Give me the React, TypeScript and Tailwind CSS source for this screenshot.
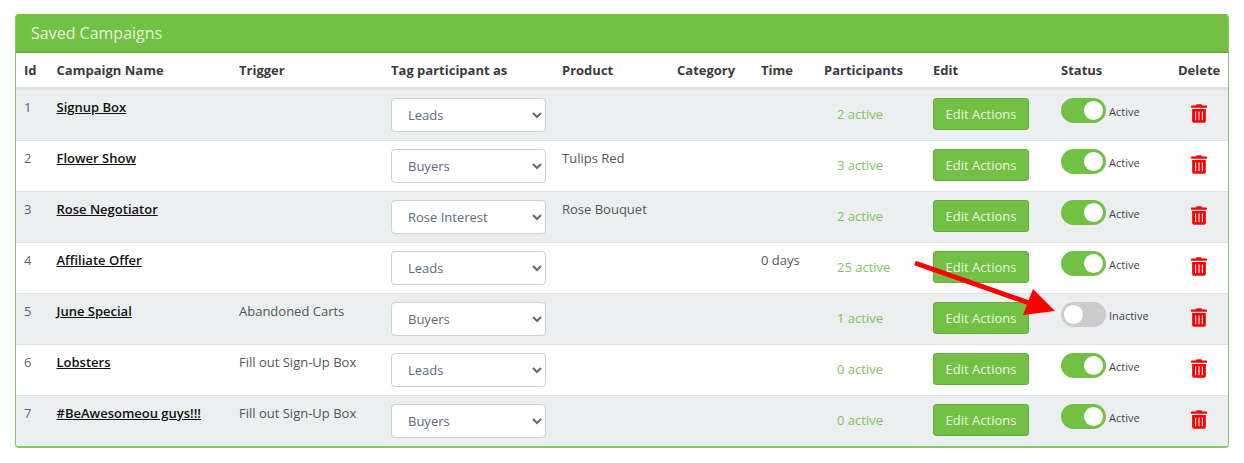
// App.tsx
import React from 'react';
import { FaTrashAlt } from 'react-icons/fa';

interface Campaign {
  id: number;
  name: string;
  trigger: string;
  tag: string;
  product: string;
  time: string;
  participants: string;
  active: boolean;
}

const campaigns: Campaign[] = [
  { id: 1, name: 'Signup Box', trigger: '', tag: 'Leads', product: '', time: '', participants: '2 active', active: true },
  { id: 2, name: 'Flower Show', trigger: '', tag: 'Buyers', product: 'Tulips Red', time: '', participants: '3 active', active: true },
  { id: 3, name: 'Rose Negotiator', trigger: '', tag: 'Rose Interest', product: 'Rose Bouquet', time: '', participants: '2 active', active: true },
  { id: 4, name: 'Affiliate Offer', trigger: '', tag: 'Leads', product: '', time: '0 days', participants: '25 active', active: true },
  { id: 5, name: 'June Special', trigger: 'Abandoned Carts', tag: 'Buyers', product: '', time: '', participants: '1 active', active: false },
  { id: 6, name: 'Lobsters', trigger: 'Fill out Sign-Up Box', tag: 'Leads', product: '', time: '', participants: '0 active', active: true },
  { id: 7, name: '#BeAwesomeou guys!!!', trigger: 'Fill out Sign-Up Box', tag: 'Buyers', product: '', time: '', participants: '0 active', active: true },
];

const headers = [
  { label: 'Id', width: 'w-[32px]', pad: 'pl-[8px]' },
  { label: 'Campaign Name', width: 'w-[182px]', pad: 'pl-[8.5px]' },
  { label: 'Trigger', width: 'w-[152px]', pad: 'pl-[9px]' },
  { label: 'Tag participant as', width: 'w-[171px]', pad: 'pl-[9px]' },
  { label: 'Product', width: 'w-[115px]', pad: 'pl-[9px]' },
  { label: 'Category', width: 'w-[84px]', pad: 'pl-[9px]' },
  { label: 'Time', width: 'w-[63px]', pad: 'pl-[9px]' },
  { label: 'Participants', width: 'w-[109px]', pad: 'pl-[9px]' },
  { label: 'Edit', width: 'w-[128px]', pad: 'pl-[9px]' },
  { label: 'Status', width: 'w-[117px]', pad: 'pl-[9px]' },
  { label: 'Delete', width: 'w-[59px]', pad: 'pl-[9px]' },
];

const cell = 'border-b border-b-[#dee2e6] group-last:border-b-0 align-top';

function Toggle({ active }: { active: boolean }) {
  return (
    <div className="flex items-center gap-[3px]">
      <span className={`flex h-[25px] w-[45px] rounded-full p-[3px] ${active ? 'justify-end bg-[#72c044]' : 'justify-start bg-[#cccccc]'}`}>
        <span className="h-[19px] w-[19px] rounded-full bg-white" />
      </span>
      <span className="relative top-[2px] text-[11px] text-[#444]">{active ? 'Active' : 'Inactive'}</span>
    </div>
  );
}

export default function App() {
  return (
    <div className="h-[463px] w-[1244px] bg-white px-[15px] pt-[14px] font-['Open_Sans',sans-serif] text-[13px] text-[#555]">
      <div className="relative w-[1214px] overflow-hidden rounded-[4px] border-x border-b-2 border-x-[#84c966] border-b-[#84c966]">
        <div className="flex h-[39px] items-center border-b-2 border-b-[#68ad3d] bg-[#72c044] pl-[15px] text-[16px] text-[#e4f4db]">
          Saved Campaigns
        </div>
        <table className="w-[1212px] table-fixed border-separate border-spacing-0">
          <thead>
            <tr className="h-[37px]">
              {headers.map((h) => (
                <th key={h.label} className={`${h.width} ${h.pad} border-b-[3px] border-b-[#dee2e6] pt-[2px] text-left align-middle font-bold whitespace-nowrap text-[#3b3b3b]`}>
                  {h.label}
                </th>
              ))}
            </tr>
          </thead>
          <tbody>
            {campaigns.map((c) => (
              <tr key={c.id} className="group h-[51px] last:h-[50px] odd:bg-[#ebeff0]">
                <td className={`${cell} pt-[8px] pl-[8px] text-[#5a6570]`}>{c.id}</td>
                <td className={`${cell} pt-[8px] pl-[8.5px]`}>
                  <a href="#" className="font-semibold whitespace-nowrap text-[#111] underline">{c.name}</a>
                </td>
                <td className={`${cell} pt-[8px] pl-[9px] whitespace-nowrap`}>{c.trigger}</td>
                <td className={`${cell} pt-[8px] pl-[9px]`}>
                  <select
                    defaultValue={c.tag}
                    className="block h-[34px] w-[155px] rounded-[4px] border border-[#d0d0d0] bg-white pl-[12px] text-[13px] text-[#5c6b7d]"
                  >
                    <option>{c.tag}</option>
                  </select>
                </td>
                <td className={`${cell} pt-[8px] pl-[9px] whitespace-nowrap`}>{c.product}</td>
                <td className={cell} />
                <td className={`${cell} pt-[8px] pl-[9px] whitespace-nowrap`}>{c.time}</td>
                <td className={`${cell} pt-[15px] pl-[22px] whitespace-nowrap text-[#80c35a]`}>{c.participants}</td>
                <td className={`${cell} pt-[8px] pl-[9px]`}>
                  <button className="block h-[32px] w-[96px] rounded-[3px] border border-[#68ad3d] bg-[#72c044] pt-[2px] text-[13px] text-[#e9f7e2]">
                    Edit Actions
                  </button>
                </td>
                <td className={`${cell} pt-[8px] pl-[9px]`}><Toggle active={c.active} /></td>
                <td className={`${cell} pt-[14px] pl-[22px]`}>
                  <FaTrashAlt className="h-[19px] w-[16px] text-[#ff0000]" />
                </td>
              </tr>
            ))}
          </tbody>
        </table>
      </div>
      {/* annotation arrow drawn over the screenshot */}
      <svg className="absolute top-0 left-0" width="1244" height="463" viewBox="0 0 1244 463">
        <line x1="915" y1="263" x2="1035" y2="305" stroke="#ff0000" strokeWidth="5" />
        <polygon points="1033,289 1055,311 1023,315" fill="#ff0000" />
      </svg>
    </div>
  );
}
